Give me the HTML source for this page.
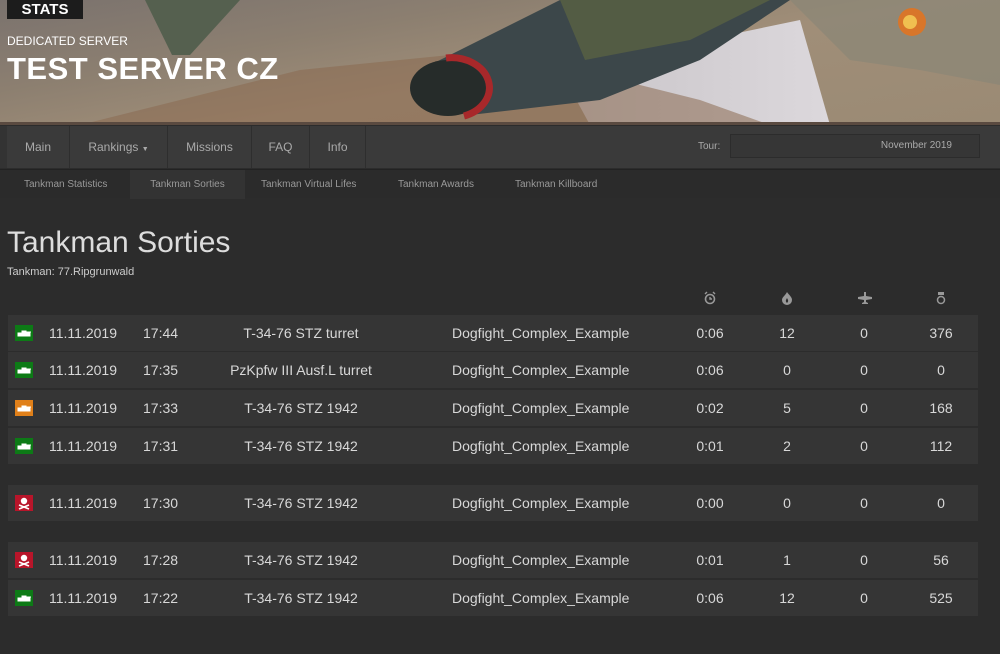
<!DOCTYPE html>
<html><head><meta charset="utf-8"><style>
*{margin:0;padding:0;box-sizing:border-box}
body{width:1000px;height:654px;background:#2c2c2c;font-family:"Liberation Sans",sans-serif;color:#ddd;overflow:hidden;position:relative}
.hdr{position:absolute;left:0;top:0;width:1000px;height:125px;overflow:hidden;background:linear-gradient(170deg,#7a726e 0%,#8c7f70 30%,#a08e78 55%,#9a8a74 100%)}
.stats{position:absolute;left:7px;top:0;width:76px;height:19px;background:#1c1c1c;color:#fff;font-weight:bold;font-size:15px;line-height:19px;text-align:center}
.ded{position:absolute;left:7px;top:34px;color:#fff;font-size:12px}
.tsc{position:absolute;left:7px;top:51px;color:#fff;font-size:31px;font-weight:bold;letter-spacing:0.5px}
.nav{position:absolute;top:126px;left:0;width:1000px;height:42px;background:#3a3a3a}
.nav div.i{position:absolute;top:0;height:42px;line-height:42px;font-size:12px;color:#aaa;text-align:center;border-right:1px solid #2e2e2e}
.sub{position:absolute;top:169px;left:0;width:1000px;height:29px;background:#2b2b2b;border-top:1px solid #222}
.sub span{position:absolute;top:0;height:29px;line-height:29px;font-size:10px;color:#999}
.act{background:#333}
h1{position:absolute;left:7px;top:226px;font-weight:normal;font-size:30px;color:#ddd}
.tk{position:absolute;left:7px;top:266px;font-size:11px;color:#ccc}
.hi{position:absolute;top:291px}
.row{position:absolute;left:8px;width:970px;height:36px;background:#353535;font-size:14px;color:#d8d8d8}
.row span{position:absolute;top:0;line-height:36px}
.ic{position:absolute;left:7px;top:10px;width:18px;height:16px}
.c{text-align:center;transform:translateX(-50%)}
</style></head><body>
<div class="hdr">
<svg width="1000" height="125" style="position:absolute;left:0;top:0">
<defs><linearGradient id="w" x1="0" x2="1"><stop offset="0" stop-color="#c8c4c8"/><stop offset="1" stop-color="#dcd8dc"/></linearGradient></defs>
<polygon points="560,70 800,20 830,125 590,125" fill="url(#w)"/>
<polygon points="80,125 300,70 500,50 700,100 770,125" fill="#8a6a50" opacity="0.55"/>
<polygon points="145,0 240,0 190,55 172,55" fill="#55604f"/>
<polygon points="420,70 560,0 790,0 700,60 600,100 470,115" fill="#3c474a"/>
<polygon points="560,0 770,0 690,40 585,60" fill="#535c44"/>
<ellipse cx="448" cy="88" rx="38" ry="28" fill="#262c2a"/>
<path d="M446,58 a38,30 0 0 1 18,58" stroke="#a8282a" stroke-width="7" fill="none"/>
<polygon points="790,0 1000,0 1000,85 920,70 850,60" fill="#8a8676" opacity="0.7"/>
<circle cx="912" cy="22" r="14" fill="#d8762a"/><circle cx="910" cy="22" r="7" fill="#f0c050"/>
<rect x="0" y="122" width="1000" height="3" fill="#5a4a40"/>
</svg>
<div class="stats">STATS</div>
<div class="ded">DEDICATED SERVER</div>
<div class="tsc">TEST SERVER CZ</div>
</div>
<div class="nav">
<div class="i" style="left:0;width:70px;border-left:7px solid #333">Main</div>
<div class="i" style="left:70px;width:98px">Rankings <small style="font-size:7px">▼</small></div>
<div class="i" style="left:168px;width:84px">Missions</div>
<div class="i" style="left:252px;width:58px">FAQ</div>
<div class="i" style="left:310px;width:56px">Info</div>
<div style="position:absolute;left:698px;top:0;line-height:42px;font-size:10px;color:#aaa">Tour:</div>
<div style="position:absolute;left:730px;top:8px;width:250px;height:24px;border:1px solid #2c2c2c;background:#363636;font-size:10px;color:#aaa;line-height:22px;text-align:right;padding-right:27px">November 2019</div>
</div>
<div class="sub">
<span style="left:24px">Tankman Statistics</span>
<span class="act" style="left:130px;width:115px;text-align:center">Tankman Sorties</span>
<span style="left:261px">Tankman Virtual Lifes</span>
<span style="left:398px">Tankman Awards</span>
<span style="left:515px">Tankman Killboard</span>
</div>
<h1>Tankman Sorties</h1>
<div class="tk">Tankman: 77.Ripgrunwald</div>
<svg class="hi" style="left:703px" width="14" height="14" viewBox="0 0 14 14"><circle cx="7" cy="8" r="4.5" fill="none" stroke="#999" stroke-width="1.6"/><path d="M2,3 l2,-2 M12,3 l-2,-2 M7,6 v2 h2" stroke="#999" stroke-width="1.4" fill="none"/></svg>
<svg class="hi" style="left:781px" width="12" height="14" viewBox="0 0 12 14"><path d="M6,1 C8,4 11,6 11,9 A5,5 0 0 1 1,9 C1,6 4,5 6,1z" fill="#999"/><path d="M6,7 C7,9 8,10 6,12 C4,10 5,9 6,7z" fill="#2c2c2c"/></svg>
<svg class="hi" style="left:857px" width="16" height="14" viewBox="0 0 16 14"><path d="M7,1 h2 v4 l6,1 v2 l-6,1 v2 l2,1 v1 h-6 v-1 l2,-1 v-2 l-6,-1 v-2 l6,-1z" fill="#999"/></svg>
<svg class="hi" style="left:936px" width="10" height="14" viewBox="0 0 10 14"><path d="M2,1 h6 v3 h-6z" fill="#999"/><circle cx="5" cy="9" r="3.5" fill="none" stroke="#999" stroke-width="1.5"/></svg>
<div id="rows"></div>
<script>
var R=[[315,'g','17:44','T-34-76 STZ turret','0:06','12','376'],[352,'g','17:35','PzKpfw III Ausf.L turret','0:06','0','0'],[390,'o','17:33','T-34-76 STZ 1942','0:02','5','168'],[428,'g','17:31','T-34-76 STZ 1942','0:01','2','112'],[485,'r','17:30','T-34-76 STZ 1942','0:00','0','0'],[542,'r','17:28','T-34-76 STZ 1942','0:01','1','56'],[580,'g','17:22','T-34-76 STZ 1942','0:06','12','525']];
var h='';R.forEach(function(r){var col={g:'#0d7a16',o:'#e0801a',r:'#b8152a'}[r[1]];
var ic=r[1]=='r'?'<circle cx="9" cy="6" r="3.2" fill="#fff"/><path d="M4,10 L14,14 M14,10 L4,14" stroke="#fff" stroke-width="1.6"/>':'<path d="M3,11 h12 v-3 h-4 v-2 h-4 v2 h-4z M9,7 h7" stroke="#fff" fill="#fff" stroke-width="1"/>';
h+='<div class="row" style="top:'+r[0]+'px"><svg class="ic" viewBox="0 0 18 16"><rect width="18" height="16" fill="'+col+'"/>'+ic+'</svg><span style="left:41px">11.11.2019</span><span style="left:135px">'+r[2]+'</span><span class="c" style="left:293px">'+r[3]+'</span><span style="left:444px">Dogfight_Complex_Example</span><span class="c" style="left:702px">'+r[4]+'</span><span class="c" style="left:779px">'+r[5]+'</span><span class="c" style="left:856px">0</span><span class="c" style="left:933px">'+r[6]+'</span></div>';});
document.getElementById('rows').innerHTML=h;
</script>
</body></html>
